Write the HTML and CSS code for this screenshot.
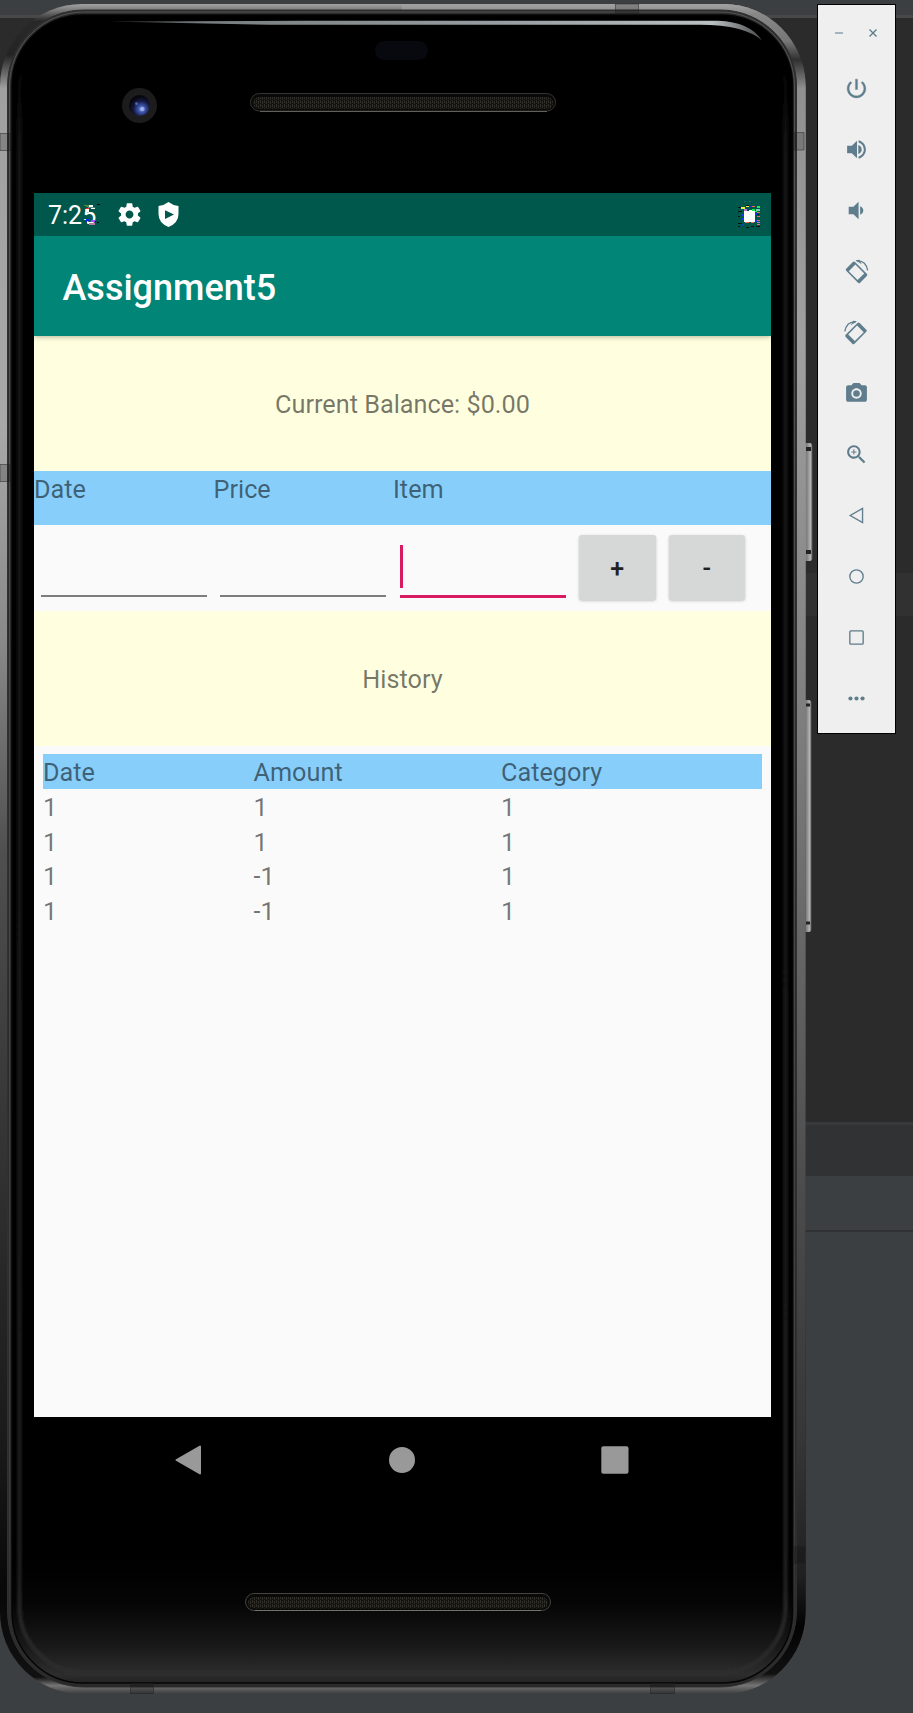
FILE: index.html
```html
<!DOCTYPE html>
<html lang="en">
<head>
<meta charset="utf-8">
<title>Assignment5</title>
<link rel="stylesheet" href="styles.css">
</head>
<body>
<div class="desktop">
  <div class="phone">
    <svg class="shell" width="820" height="1713" viewBox="0 0 820 1713" aria-hidden="true">
      <defs>
        <linearGradient id="metalL" gradientUnits="userSpaceOnUse" x1="0" y1="4" x2="0" y2="1694">
          <stop offset="0" stop-color="#a2a2a2"/><stop offset=".004" stop-color="#777"/><stop offset=".01" stop-color="#282828"/><stop offset=".03" stop-color="#242424"/><stop offset=".05" stop-color="#a0a0a0"/><stop offset=".25" stop-color="#a8a8a8"/><stop offset=".38" stop-color="#888"/><stop offset=".5" stop-color="#505050"/><stop offset=".75" stop-color="#282828"/><stop offset=".85" stop-color="#1a1a1a"/><stop offset=".94" stop-color="#080808"/><stop offset=".99" stop-color="#111"/><stop offset=".995" stop-color="#747474"/><stop offset="1" stop-color="#3c3c3c"/>
        </linearGradient>
        <linearGradient id="metalR" gradientUnits="userSpaceOnUse" x1="0" y1="4" x2="0" y2="1694">
          <stop offset="0" stop-color="#a2a2a2"/><stop offset=".006" stop-color="#888"/><stop offset=".022" stop-color="#777"/><stop offset=".033" stop-color="#303030"/><stop offset=".05" stop-color="#909090"/><stop offset=".2" stop-color="#a0a0a0"/><stop offset=".45" stop-color="#7a7a7a"/><stop offset=".7" stop-color="#4c4c4c"/><stop offset=".85" stop-color="#363636"/><stop offset=".93" stop-color="#202020"/><stop offset=".96" stop-color="#030303"/><stop offset=".988" stop-color="#111"/><stop offset=".995" stop-color="#747474"/><stop offset="1" stop-color="#3c3c3c"/>
        </linearGradient>
        <linearGradient id="glass" gradientUnits="userSpaceOnUse" x1="0" y1="1560" x2="0" y2="1684">
          <stop offset="0" stop-color="#000"/><stop offset=".35" stop-color="#050505"/><stop offset=".7" stop-color="#191919"/><stop offset=".92" stop-color="#2d2d2d"/><stop offset="1" stop-color="#222"/>
        </linearGradient>
        <linearGradient id="edge" gradientUnits="userSpaceOnUse" x1="0" y1="60" x2="0" y2="1670">
          <stop offset="0" stop-color="#1e1e1e" stop-opacity="0"/><stop offset=".06" stop-color="#1e1e1e"/><stop offset=".9" stop-color="#202020"/><stop offset=".96" stop-color="#2a2a2a"/><stop offset="1" stop-color="#2d2d2d"/>
        </linearGradient>
        <linearGradient id="rim" gradientUnits="userSpaceOnUse" x1="0" y1="10" x2="0" y2="1690">
          <stop offset="0" stop-color="#666"/><stop offset=".5" stop-color="#555"/><stop offset=".9" stop-color="#444"/><stop offset="1" stop-color="#222"/>
        </linearGradient>
        <linearGradient id="shine" gradientUnits="userSpaceOnUse" x1="105" y1="0" x2="765" y2="0">
          <stop offset="0" stop-color="#222"/><stop offset=".15" stop-color="#777d7f"/><stop offset=".6" stop-color="#989fa2"/><stop offset=".92" stop-color="#b9c0c2"/><stop offset="1" stop-color="#444"/>
        </linearGradient>
        <linearGradient id="button" x1="0" x2="1" y1="0" y2="0">
          <stop offset="0" stop-color="#505050"/><stop offset=".55" stop-color="#868686"/><stop offset=".82" stop-color="#b4b4b4"/><stop offset="1" stop-color="#555"/>
        </linearGradient>
        <radialGradient id="lens" cx=".6" cy=".67" r=".6">
          <stop offset="0" stop-color="#9fb4ee"/><stop offset=".25" stop-color="#3f58b0"/><stop offset=".65" stop-color="#14183f"/><stop offset="1" stop-color="#07070d"/>
        </radialGradient>
        <pattern id="mesh" width="4" height="4" patternUnits="userSpaceOnUse">
          <rect width="4" height="4" fill="#15130f"/><rect width="1" height="3" x="0" y="0" fill="#302e29"/><rect width="1" height="3" x="2" y="1" fill="#302e29"/>
        </pattern>
        <filter id="soft" filterUnits="userSpaceOnUse" x="0" y="0" width="820" height="1713"><feGaussianBlur stdDeviation="1.500"/></filter>
        <clipPath id="rightHalf"><rect x="402" y="0" width="420" height="1713"/></clipPath>
      </defs>
      <rect x="801" y="443" width="11.500" height="118" rx="3" fill="url(#button)"/>
      <path d="M806 449h5M806 552h5" stroke="#222" stroke-width="4"/>
      <rect x="801" y="700" width="10.500" height="232" rx="3" fill="url(#button)"/>
      <path d="M806 705h4M806 923h4" stroke="#222" stroke-width="3"/>
      <rect x="0" y="4" width="805.500" height="1690" rx="82" fill="url(#metalL)"/>
      <rect x="0" y="4" width="805.500" height="1690" rx="82" fill="url(#metalR)" clip-path="url(#rightHalf)"/>
      <rect x="7.500" y="10" width="789" height="1677" rx="76" fill="#2c2c2c" stroke="#303030"/>
      <rect x="9.500" y="12" width="785" height="1674" rx="74" fill="none" stroke="url(#rim)" stroke-opacity=".7"/>
      <rect x="12" y="15" width="780.500" height="1668" rx="71" fill="url(#glass)" stroke="#050505" stroke-width="1.500"/>
      <rect x="19.500" y="23" width="766" height="1650" rx="66" fill="none" stroke="url(#edge)" stroke-width="3.500" filter="url(#soft)"/>
      <path d="M107 21.500L300 20.800H718Q750 22 762 40.500Q745 25 700 24.700H270Z" fill="url(#shine)"/>
      <g fill="#000" fill-opacity=".18" stroke="#222" stroke-opacity=".5">
        <path d="M0 133.500H11V150.500H0ZM0 464.500H11V481.500H0ZM794 132.500H804V150H794ZM794 1546.500H805V1563.500H794ZM615.500 4V14H638.500V4ZM130.500 1683.500V1693.500H153.500V1683.500ZM650.500 1683.500V1693.500H674.500V1683.500Z"/>
      </g>
      <rect x="375" y="41" width="53" height="19" rx="9.500" fill="#08090e"/>
      <circle cx="139.500" cy="105.500" r="17.500" fill="#1d1c1d"/>
      <circle cx="139.500" cy="105.500" r="10.500" fill="url(#lens)"/>
      <circle cx="136.500" cy="103.500" r="1.500" fill="#4862b4"/>
      <circle cx="142.500" cy="109" r="2.200" fill="#b5c4f4" fill-opacity=".6"/>
      <rect x="250.500" y="93.500" width="305" height="17.500" rx="8.750" fill="#090909" stroke="#35332f"/>
      <path d="M260 111.500H547" stroke="#625f58"/>
      <rect x="253" y="97" width="300" height="12" rx="6" fill="url(#mesh)"/>
      <rect x="245.500" y="1593.500" width="305" height="17" rx="8.500" fill="#090909" stroke="#44433f"/>
      <path d="M255 1610.500H541" stroke="#73716b"/>
      <rect x="248" y="1597" width="300" height="11.500" rx="5.750" fill="url(#mesh)"/>
    </svg>

    <main class="screen">
      <header class="status">
        <span class="clock">7:25
          <svg class="noise-clock" width="17" height="22" viewBox="0 0 17 22" shape-rendering="crispEdges" aria-hidden="true">
            <path fill="#00574b" d="M0 1h5v4H0zM0 5h2v3H0zM0 16h4v4H0zM10 1h3v2h-3z"/>
            <path fill="#4a8b3f" d="M1 1h5v1H1zM3 2h3v1H3z"/><path fill="#e33" d="M3 4h3v1H3zM12 15h1v2h-1z"/>
            <path fill="#000" d="M14 0h3v1h-3zM11 17h2v1h-2zM14 18h2v1h-2z"/><path fill="#12f" d="M3 15h3v2H3zM2 17h2v1H2z"/>
            <path fill="#a34cff" d="M8 16h4v2H8z"/><path fill="#b977a4" d="M6 19h6v2H6z"/><path fill="#fff" d="M3 5h3v3H3zM8 4h4v1H8z"/>
          </svg>
        </span>
        <svg class="gear" width="27" height="27" viewBox="0 0 24 24" fill="#fff"><path d="M19.430 12.980c.040-.320.070-.640.070-.980s-.030-.660-.070-.980l2.110-1.650c.190-.150.240-.420.120-.640l-2-3.460c-.120-.220-.390-.300-.610-.220l-2.490 1c-.520-.400-1.080-.730-1.690-.980l-.380-2.650C14.460 2.180 14.250 2 14 2h-4c-.250 0-.460.180-.490.420l-.380 2.650c-.610.250-1.170.590-1.690.980l-2.490-1c-.230-.090-.490 0-.610.220l-2 3.460c-.130.220-.070.490.120.640l2.110 1.650c-.040.320-.070.650-.070.980s.030.660.070.980l-2.110 1.650c-.190.150-.240.420-.120.640l2 3.460c.120.220.390.300.610.220l2.490-1c.520.400 1.080.730 1.690.980l.380 2.650c.030.240.240.420.490.420h4c.250 0 .460-.180.490-.420l.380-2.650c.610-.250 1.170-.590 1.690-.980l2.490 1c.230.090.490 0 .610-.220l2-3.460c.120-.220.070-.490-.120-.640l-2.110-1.650zM12 15.500c-1.930 0-3.500-1.570-3.500-3.500s1.570-3.500 3.500-3.500 3.500 1.570 3.500 3.500-1.570 3.500-3.500 3.500z"/></svg>
        <svg class="shield" width="21" height="25" viewBox="0 0 21 25"><path d="M10.500 0Q15 3.500 20.500 4V12Q20.500 21 10.500 25Q.5 21 .5 12V4Q6 3.500 10.500 0Z" fill="#fff"/><path d="M7 8.300L16 12.500L7 17Z" fill="#00574b"/></svg>
        <svg class="battery" width="22" height="28" viewBox="0 0 22 28" shape-rendering="crispEdges">
          <path fill="#2d655a" d="M6 1h2v1H6zM11 1h2v1h-2z"/>
          <path fill="#111" d="M0 7h3v1H0zM0 11h4v1H0zM0 16h2v1H0zM0 23h4v1H0zM8 5h3v1H8zM0 26h2v1H0zM8 27h3v1H8zM13 26h3v1h-3zM18 26h4v1h-4zM17 14h4v1h-4z"/>
          <path fill="#e8f04c" d="M3 7h4v2H3zM8 6h3v1H8z"/><path fill="#19f04a" d="M19 6h3v2h-3zM14 9h3v2h-3zM17 11h2v1h-2z"/>
          <path fill="#1535ff" d="M3 14h3v2H3zM3 18h3v2H3zM3 24h3v1H3zM17 13h2v2h-2zM17 20h2v2h-2zM12 6h3v1h-3z"/>
          <path fill="#ff6250" d="M14 6h3v1h-3zM7 22h4v1H7zM13 22h3v1h-3zM19 12h3v1h-3zM19 16h3v1h-3zM19 20h3v1h-3zM19 24h3v1h-3z"/>
          <path fill="#bd78dc" d="M6 9h3v2H6zM19 22h3v1h-3z"/><path fill="#79ccc6" d="M18 9h4v2h-4z"/>
          <path fill="#fff" d="M6 11h5v-1h3v1h3v11H6z"/>
        </svg>
      </header>
      <h1 class="appbar">Assignment5</h1>
      <section class="panel">Current Balance: $0.00</section>
      <div class="entry-head"><span>Date</span><span>Price</span><span>Item</span></div>
      <form class="entry">
        <span class="field"></span>
        <span class="field"></span>
        <span class="field focused"><i class="caret"></i></span>
        <button class="btn" type="button">+</button>
        <button class="btn" type="button">-</button>
      </form>
      <section class="panel">History</section>
      <div class="table">
        <div class="row head"><span>Date</span><span>Amount</span><span>Category</span></div>
        <div class="row"><span>1</span><span>1</span><span>1</span></div>
        <div class="row"><span>1</span><span>1</span><span>1</span></div>
        <div class="row"><span>1</span><span>-1</span><span>1</span></div>
        <div class="row"><span>1</span><span>-1</span><span>1</span></div>
      </div>
    </main>
    <nav class="softkeys">
      <svg width="28" height="30" viewBox="0 0 28 30"><path d="M1.500 15L25 1.500V28.500Z" fill="#999" stroke="#999" stroke-width="2" stroke-linejoin="round"/></svg>
      <svg width="28" height="30" viewBox="0 0 28 30"><circle cx="14" cy="15" r="13" fill="#999"/></svg>
      <svg width="28" height="30" viewBox="0 0 28 30"><rect x=".3" y="1.300" width="27.200" height="27.400" rx="2" fill="#999"/></svg>
    </nav>
  </div>

  <aside class="toolbar">
    <div class="window">
      <svg width="8" height="8" viewBox="0 0 8 8"><path d="M0 4h8" stroke="#a3b4bc" stroke-width="2"/></svg>
      <svg width="8" height="8" viewBox="0 0 8 8"><path d="M.5.500l7 7M7.500.500l-7 7" stroke="#5f7d8c" stroke-width="1.400"/></svg>
    </div>
    <svg class="tool" viewBox="0 0 24 24"><path d="M13 3h-2v10h2V3zm4.830 2.170l-1.420 1.420C17.990 7.860 19 9.810 19 12c0 3.870-3.130 7-7 7s-7-3.130-7-7c0-2.190 1.010-4.140 2.580-5.420L6.170 5.170C4.230 6.820 3 9.260 3 12c0 4.970 4.030 9 9 9s9-4.030 9-9c0-2.740-1.230-5.180-3.170-6.830z" stroke="#5f7d8c" stroke-width=".3"/></svg>
    <svg class="tool" viewBox="0 0 24 24"><path d="M3 8.500v7h4.500l5 5V3.500l-5 5H3zM17 12c0-1.900-1.100-3.500-3.300-4.300v8.600c2.200-.8 3.300-2.400 3.300-4.300zM14 3.230v2.060c2.890.860 5 3.540 5 6.710s-2.110 5.850-5 6.710v2.060c4.010-.910 7-4.490 7-8.770s-2.990-7.860-7-8.770z"/></svg>
    <svg class="tool" viewBox="0 0 24 24"><path d="M4.500 8.500v7H9l5 5V3.500l-5 5H4.500zm14 3.500c0-1.770-1.020-3.290-3-4.030v8.050c1.980-.730 3-2.250 3-4.020z"/></svg>
    <svg class="tool" viewBox="0 0 24 24"><g transform="translate(12 12.800) rotate(45)"><path fill-rule="evenodd" d="M-8-6H8Q9.500-6 9.500-4.500V4.500Q9.500 6 8 6H-8Q-9.500 6-9.500 4.500V-4.500Q-9.500-6-8-6ZM-6-4.500V4.500H6V-4.500Z"/></g><path d="M12 1.800Q21 1 22.700 11" class="line"/><path d="M11 1.200L14.800.8L17 5Z"/></svg>
    <svg class="tool" viewBox="0 0 24 24"><g transform="translate(23.500) scale(-1 1)"><g transform="translate(12 12.800) rotate(45)"><path fill-rule="evenodd" d="M-8-6H8Q9.500-6 9.500-4.500V4.500Q9.500 6 8 6H-8Q-9.500 6-9.500 4.500V-4.500Q-9.500-6-8-6ZM-6-4.500V4.500H6V-4.500Z"/></g><path d="M12 1.800Q21 1 22.700 11" class="line"/><path d="M11 1.200L14.800.8L17 5Z"/></g></svg>
    <svg class="tool" viewBox="0 0 24 24"><circle cx="12" cy="12" r="3.200"/><path d="M9 2L7.170 4H4c-1.100 0-2 .9-2 2v12c0 1.100.9 2 2 2h16c1.100 0 2-.9 2-2V6c0-1.100-.9-2-2-2h-3.170L15 2H9zm3 15c-2.760 0-5-2.240-5-5s2.240-5 5-5 5 2.240 5 5-2.240 5-5 5z"/></svg>
    <svg class="tool" viewBox="0 0 24 24"><path d="M15.500 14h-.790l-.280-.270C15.410 12.590 16 11.110 16 9.500 16 5.910 13.090 3 9.500 3S3 5.910 3 9.500 5.910 16 9.500 16c1.610 0 3.090-.590 4.230-1.570l.270.280v.790l5 4.990L20.490 19l-4.990-5zm-6 0C7.010 14 5 11.990 5 9.500S7.010 5 9.500 5 14 7.010 14 9.500 11.990 14 9.500 14z"/><path d="M12 10h-2v2H9v-2H7V9h2V7h1v2h2v1z"/></svg>
    <svg class="tool" viewBox="0 0 24 24"><path class="line" d="M17.800 5.200V18.800L6 12Z"/></svg>
    <svg class="tool" viewBox="0 0 24 24"><circle class="line" cx="12" cy="12" r="6.400"/></svg>
    <svg class="tool" viewBox="0 0 24 24"><rect class="line" x="5.600" y="5.600" width="12.800" height="12.800" rx="1"/></svg>
    <svg class="tool" viewBox="0 0 24 24"><circle cx="6.200" cy="12" r="2"/><circle cx="12" cy="12" r="2"/><circle cx="17.800" cy="12" r="2"/></svg>
  </aside>
</div>
</body>
</html>
```
FILE: styles.css
```css
* { box-sizing: border-box; }

body {
  margin: 0;
  font-family: Roboto, "Noto Sans", sans-serif;
  background: linear-gradient(#3c3f41 0 15px, #484848 15px 18px, #2b2b2b 18px 573px, #313131 573px 616px, #2b2b2b 616px 1122px, #38393b 1122px 1125px, #313234 1125px 1176px, #3c3f41 1176px 1230px, #2f3133 1230px 1232px, #3c3f41 1232px);
}

.desktop {
  display: flex;
  align-items: flex-start;
  height: 1713px;
  overflow: hidden;
}

.phone {
  position: relative;
  flex: none;
  width: 817px;
  height: 1713px;
  padding: 193px 46px 0 34px;
}

/* Device body sits behind the screen */
.shell {
  position: absolute;
  left: 0;
  top: 0;
}

.screen {
  position: relative;
  height: 1224px;
  background: #fafafa;
  color: rgba(0, 0, 0, .54);
  font-size: 25.250px;
  line-height: 35px;
}

.status {
  display: flex;
  align-items: center;
  height: 43px;
  padding: 0 11px 0 14px;
  background: #00574b;
  color: #fff;
}

.clock { position: relative; width: 68px; padding-top: 2px; font-size: 25px; white-space: nowrap; }
.noise-clock { position: absolute; left: 35px; top: 8px; }
.gear { margin-right: 15px; }
.battery { margin: 0 0 2px auto; }

.appbar {
  position: relative;
  height: 100px;
  margin: 0;
  padding-left: 28.500px;
  background: #008577;
  box-shadow: 0 1px 5px rgba(0, 0, 0, .3);
  clip-path: inset(0 0 -10px 0);
  color: #fff;
  font-size: 36px;
  font-weight: 500;
  line-height: 105px;
}

.panel {
  height: 135px;
  background: #ffffdf;
  line-height: 137px;
  text-align: center;
}

.entry-head {
  display: grid;
  grid-template-columns: 179.500px 179.500px auto;
  height: 53.500px;
  background: #87cefa;
  line-height: 37px;
}

.entry {
  display: flex;
  height: 86px;
  padding: 10.500px 0 0 7px;
}

.field {
  width: 166px;
  height: 62px;
  margin-right: 13px;
  border-bottom: 2px solid #7d7d7d;
}
.field:nth-child(2) { margin-right: 14px; }
.field.focused { height: 63px; border-bottom: 3px solid #d81b60; }

.caret {
  display: block;
  width: 3px;
  height: 43px;
  margin-top: 10px;
  background: #d81b60;
}

.btn {
  width: 76.500px;
  height: 65px;
  margin-right: 13px;
  padding: 2px 0 0;
  border: 0;
  border-radius: 3px;
  background: #d6d7d7;
  box-shadow: 0 1px 3px rgba(0, 0, 0, .22);
  color: #212121;
  font: 500 25px Roboto, sans-serif;
}

.table { padding: 8.500px 9px 0; }
.row {
  display: grid;
  grid-template-columns: 210.500px 247.500px auto;
  height: 34.800px;
  line-height: 38px;
}
.row.head { background: #87cefa; }

.softkeys {
  position: relative;
  display: flex;
  justify-content: space-between;
  align-items: center;
  height: 86px;
  padding: 0 142px 0 141px;
}

.toolbar {
  display: flex;
  flex-direction: column;
  align-items: center;
  flex: none;
  width: 79px;
  height: 730px;
  margin-top: 4px;
  padding-right: 1px;
  border: 1px solid #000;
  background: #efefef;
}

.window {
  display: flex;
  gap: 26px;
  height: 8px;
  margin: 24px 0 38.500px;
}

.tool {
  flex: none;
  width: 25px;
  height: 25px;
  margin-bottom: 36px;
  fill: #5f7d8c;
  overflow: visible;
}
.line { fill: none; stroke: #5f7d8c; stroke-width: 1.300; }
```
